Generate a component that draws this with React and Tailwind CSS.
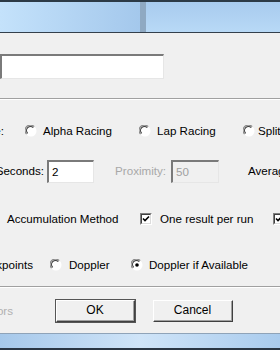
import React from 'react';

function Radio({ checked }) {
    return (
        <svg width="12" height="12" viewBox="0 0 12 12" className="shrink-0">
            <circle cx="6" cy="6" r="5.5" fill="#ffffff" />
            <path d="M1.6 9.2 A5 5 0 0 1 9.2 1.6" fill="none" stroke="#8a8a8a" strokeWidth="1.2" />
            <path d="M2.7 8.3 A3.8 3.8 0 0 1 8.3 2.7" fill="none" stroke="#3c3c3c" strokeWidth="1.1" />
            <path d="M9.6 3 A5 5 0 0 1 3 9.6" fill="none" stroke="#ffffff" strokeWidth="1.2" />
            {checked && <circle cx="6" cy="6" r="1.8" fill="#000000" />}
        </svg>
    );
}

function Check({ checked }) {
    return (
        <div className="w-[12px] h-[12px] shrink-0 bg-white border-t border-l border-t-[#808080] border-l-[#808080] border-b border-r border-b-white border-r-white">
            <div className="w-full h-full border-t border-l border-t-[#404040] border-l-[#404040] border-b border-r border-b-[#dcdcdc] border-r-[#dcdcdc] flex items-center justify-center">
                {checked && (
                    <svg width="8" height="8" viewBox="0 0 8 8">
                        <path d="M1 3.5 L3 5.5 L7 1.5" fill="none" stroke="#000" strokeWidth="1.6" />
                    </svg>
                )}
            </div>
        </div>
    );
}

function Sunken({ className, children }) {
    return (
        <div className={`shrink-0 border-t-2 border-l-2 border-t-[#7a7a7a] border-l-[#7a7a7a] border-b border-r border-b-[#e6e6e6] border-r-[#e6e6e6] flex items-center ${className}`}>
            {children}
        </div>
    );
}

function Button({ label, isDefault }) {
    return (
        <div className={`shrink-0 h-[24px] ${isDefault ? 'w-[81px] border border-[#555]' : 'w-[82px] border border-transparent'}`}>
            <div className="w-full h-full border-t border-l border-t-white border-l-white border-b border-r border-b-[#404040] border-r-[#404040] bg-[#f0f0f0]">
                <div className="w-full h-full border-b border-r border-b-[#a0a0a0] border-r-[#a0a0a0] flex items-center justify-center text-[12px] text-black">
                    {label}
                </div>
            </div>
        </div>
    );
}

function App() {
    return (
        <div className="w-[280px] h-[350px] overflow-hidden bg-[#f0f0f0] flex flex-col text-[11.6px] text-black" style={{ fontFamily: '"Liberation Sans", Arial, sans-serif' }}>
            {/* glass title bar */}
            <div className="h-[33px] shrink-0 border-t-2 border-t-[#2c3a46] border-b border-b-[#34404c] bg-gradient-to-r from-[#bcdcf8] via-[#a9cdf0] to-[#b4d6f6] flex">
                <div className="w-[140px] bg-gradient-to-r from-[#c4e2fb] to-[#a4c8ec]"></div>
                <div className="w-[6px] bg-[#8fa9c2]"></div>
                <div className="flex-1 bg-gradient-to-b from-[#a8cbee] to-[#b8d9f6]"></div>
            </div>

            {/* name box */}
            <div className="h-[66px] shrink-0 flex flex-col border-b border-b-[#a0a0a0]">
                <div className="h-[21px]"></div>
                <Sunken className="w-[164px] h-[25px] bg-white border-l-0"></Sunken>
            </div>
            <div className="h-px bg-white shrink-0"></div>

            {/* race type */}
            <div className="h-[60px] shrink-0 flex items-center pt-[1px] whitespace-nowrap">
                <span className="shrink-0 -ml-[30px] w-[34px] text-right">Type:</span>
                <span className="shrink-0 w-[21px]"></span>
                <Radio />
                <span className="shrink-0 ml-[6px] w-[96px]">Alpha Racing</span>
                <Radio />
                <span className="shrink-0 ml-[6px] w-[86px]">Lap Racing</span>
                <Radio />
                <span className="shrink-0 ml-[3px]">Split Racing</span>
            </div>

            {/* seconds row */}
            <div className="h-[22px] shrink-0 flex items-center whitespace-nowrap">
                <span className="shrink-0 -ml-[10px] w-[54px] text-right">Seconds:</span>
                <span className="shrink-0 w-[3px]"></span>
                <Sunken className="w-[47px] h-[23px] bg-white pl-[3px]">2</Sunken>
                <span className="shrink-0 w-[72px] text-right text-[#a8a8a8]">Proximity:</span>
                <span className="shrink-0 w-[5px]"></span>
                <Sunken className="w-[48px] h-[23px] bg-[#f0f0f0] pl-[3px] text-[#a0a0a0]">50</Sunken>
                <span className="shrink-0 ml-[29px]">Average</span>
            </div>

            {/* accumulation */}
            <div className="h-[74px] shrink-0 flex items-center whitespace-nowrap">
                <span className="shrink-0 ml-[7px] w-[133px]">Accumulation Method</span>
                <Check checked />
                <span className="shrink-0 ml-[8px] w-[113px]">One result per run</span>
                <Check checked />
            </div>

            {/* doppler */}
            <div className="h-[18px] shrink-0 flex items-center whitespace-nowrap">
                <span className="shrink-0 -ml-[40px] w-[73px] text-right">Trackpoints</span>
                <span className="shrink-0 w-[17px]"></span>
                <Radio />
                <span className="shrink-0 ml-[7px] w-[62px]">Doppler</span>
                <Radio checked />
                <span className="shrink-0 ml-[6px]">Doppler if Available</span>
            </div>

            <div className="h-[13px] shrink-0 border-b border-b-[#a0a0a0]"></div>
            <div className="h-px bg-white shrink-0"></div>

            {/* buttons */}
            <div className="h-[45px] shrink-0 flex items-center whitespace-nowrap">
                <span className="shrink-0 -ml-[30px] w-[43px] text-right text-[#b0b0b0]">Colors</span>
                <span className="shrink-0 w-[42px]"></span>
                <Button label="OK" isDefault />
                <span className="shrink-0 w-[16px]"></span>
                <Button label="Cancel" />
            </div>

            {/* bottom frame */}
            <div className="flex-1 border-t border-t-[#8fa3b8] bg-gradient-to-r from-[#a6c8ea] via-[#cfe4f8] to-[#a9cbed] border-b-2 border-b-[#2a3644]"></div>
        </div>
    );
}

export default App;
